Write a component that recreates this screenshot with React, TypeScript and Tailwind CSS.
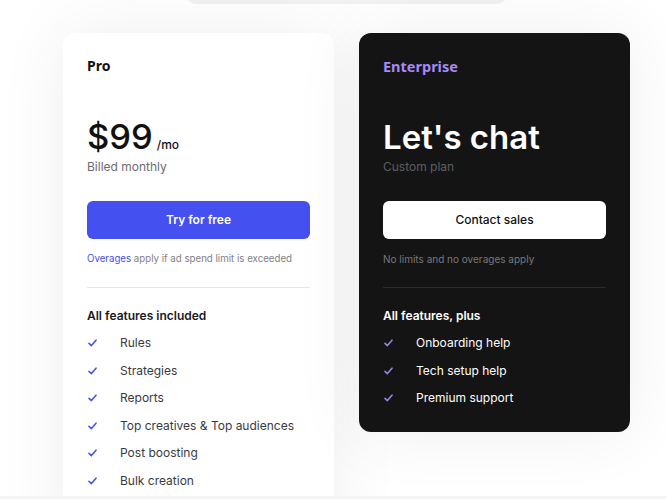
import React from 'react';

const sans = { fontFamily: 'Inter, "Noto Sans", sans-serif' };
const heading = { fontFamily: '"Noto Sans", Inter, sans-serif' };

function CheckMark({ color }: { color: string }) {
  return (
    <svg width="9" height="8" viewBox="0 0 9 8" fill="none" aria-hidden>
      <path d="M1 4.3 L3.4 6.6 L8 1.2" stroke={color} strokeWidth="1.6" strokeLinecap="round" strokeLinejoin="round" />
    </svg>
  );
}

function FeatureList({ items, dark }: { items: string[]; dark?: boolean }) {
  return (
    <ul className="mt-[7px] flex flex-col gap-[7.6px]">
      {items.map((item) => (
        <li key={item} className="flex h-[20px] items-center">
          <span className="flex w-[33px] pl-px">
            <CheckMark color={dark ? '#9b7fe6' : '#4a55e8'} />
          </span>
          <span className={`text-[12px] leading-[20px] ${dark ? 'text-white' : 'text-[#3a3a3f]'}`}>{item}</span>
        </li>
      ))}
    </ul>
  );
}

export default function App() {
  return (
    <div className="h-[499px] w-[666px] overflow-hidden bg-white" style={sans}>
      <div className="relative h-[496px] overflow-hidden">
        <div className="ml-[185px] -mt-[36px] h-[40px] w-[323px] rounded-[12px] bg-[#f2f2f2] p-[4px] pl-[5px]">
          <div className="-mt-[7px] h-[38px] w-[115px] rounded-[10px] bg-[#e2e2e2]" />
        </div>

        <div className="flex items-start gap-[25px] pl-[63px] pt-[29px]">
          <div className="h-[520px] w-[271px] shrink-0 rounded-[12px] bg-white px-[24px] pt-[21px] shadow-[0_0_70px_rgba(0,0,0,0.07)]">
            <div className="text-[14px] font-bold leading-[24px] text-[#111]" style={heading}>Pro</div>
            <div className="mt-[41px] flex items-baseline">
              <span className="text-[34.5px] font-medium leading-[36px] text-[#111]">$99</span>
              <span className="ml-[4px] text-[12px] font-medium text-[#111]">/mo</span>
            </div>
            <div className="mt-[2px] text-[12px] leading-[20px] text-[#6b6b70]">Billed monthly</div>
            <button type="button" className="mt-[24px] flex h-[38px] w-full items-center justify-center rounded-[6px] bg-[#4451f0] text-[12px] font-semibold text-white">
              Try for free
            </button>
            <p className="mt-[12px] whitespace-nowrap text-[9.7px] leading-[16px] text-[#808085]">
              <span className="text-[#4451f0]">Overages</span> apply if ad spend limit is exceeded
            </p>
            <div className="mt-[20px] h-px bg-[#e6e6e6]" />
            <div className="mt-[18px] text-[12px] font-semibold leading-[20px] text-[#1a1a1f]">All features included</div>
            <FeatureList items={['Rules', 'Strategies', 'Reports', 'Top creatives & Top audiences', 'Post boosting', 'Bulk creation']} />
          </div>

          <div className="w-[271px] shrink-0 rounded-[12px] bg-[#141414] px-[24px] pb-[24px] pt-[21px] shadow-[0_0_70px_rgba(0,0,0,0.07)]">
            <div className="text-[14.5px] font-bold leading-[24px] text-[#a58bf5]" style={heading}>Enterprise</div>
            <div className="mt-[41px] text-[33px] font-semibold leading-[36px] text-white">Let's chat</div>
            <div className="mt-[2px] text-[12px] leading-[20px] text-[#5e5e62]">Custom plan</div>
            <button type="button" className="mt-[24px] flex h-[38px] w-full items-center justify-center rounded-[6px] bg-white text-[12px] font-medium text-[#111]">
              Contact sales
            </button>
            <p className="mt-[12px] text-[10px] leading-[16px] text-[#77777c]">No limits and no overages apply</p>
            <div className="mt-[20px] h-px bg-[#2c2c2e]" />
            <div className="mt-[18px] text-[12px] font-semibold leading-[20px] text-white">All features, plus</div>
            <FeatureList dark items={['Onboarding help', 'Tech setup help', 'Premium support']} />
          </div>
        </div>
      </div>
      <div className="h-[3px] bg-[#f3f4f6]" />
    </div>
  );
}
